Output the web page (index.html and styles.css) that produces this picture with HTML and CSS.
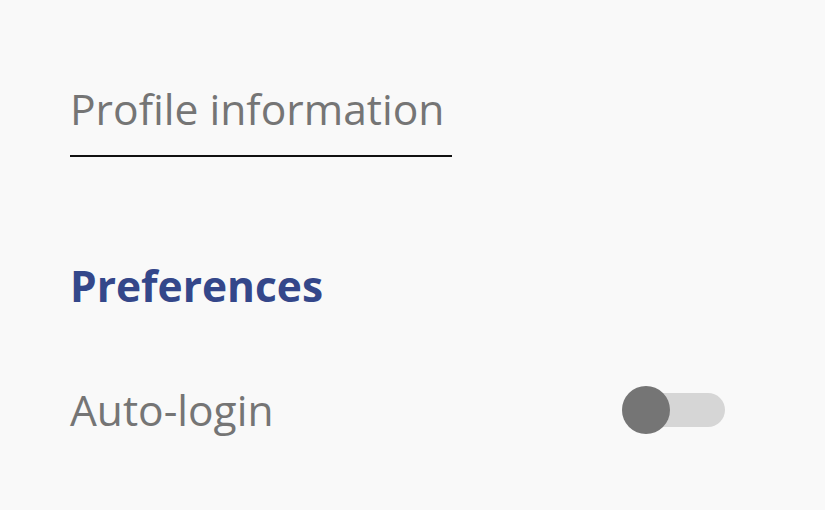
FILE: index.html
```html
<!DOCTYPE html>
<html>
<head>
<meta charset="utf-8">
<link rel="stylesheet" href="styles.css">
</head>
<body>
<div class="page">
  <div class="field">
    <div class="field-label">Profile information</div>
  </div>
  <h2 class="section-title">Preferences</h2>
  <div class="row">
    <span class="row-label">Auto-login</span>
    <span class="switch"><span class="track"></span><span class="thumb"></span></span>
  </div>
</div>
</body>
</html>
```
FILE: styles.css
```css
html, body {
  margin: 0;
  padding: 0;
  background: #f9f9f9;
}
body {
  width: 825px;
  height: 510px;
  overflow: hidden;
  font-family: "Open Sans", sans-serif;
}
.page {
  padding: 79px 0 0 70px;
}
.field {
  width: 382px;
  border-bottom: 2px solid #111;
  padding-bottom: 18px;
}
.field-label {
  font-size: 42.6px;
  line-height: 58px;
  color: #757575;
}
.section-title {
  margin: 100px 0 0 0;
  font-size: 42.5px;
  line-height: 58px;
  font-weight: 700;
  color: #34478a;
}
.row {
  margin-top: 66px;
  display: flex;
  align-items: center;
  width: 655px;
  justify-content: space-between;
}
.row-label {
  font-size: 42.5px;
  line-height: 58px;
  color: #757575;
}
.switch {
  position: relative;
  width: 103px;
  height: 48px;
  display: flex;
  align-items: center;
}
.track {
  width: 103px;
  height: 34px;
  border-radius: 17px;
  background: #d6d6d6;
}
.thumb {
  position: absolute;
  left: 0;
  top: 0;
  width: 48px;
  height: 48px;
  border-radius: 50%;
  background: #757575;
}
```
